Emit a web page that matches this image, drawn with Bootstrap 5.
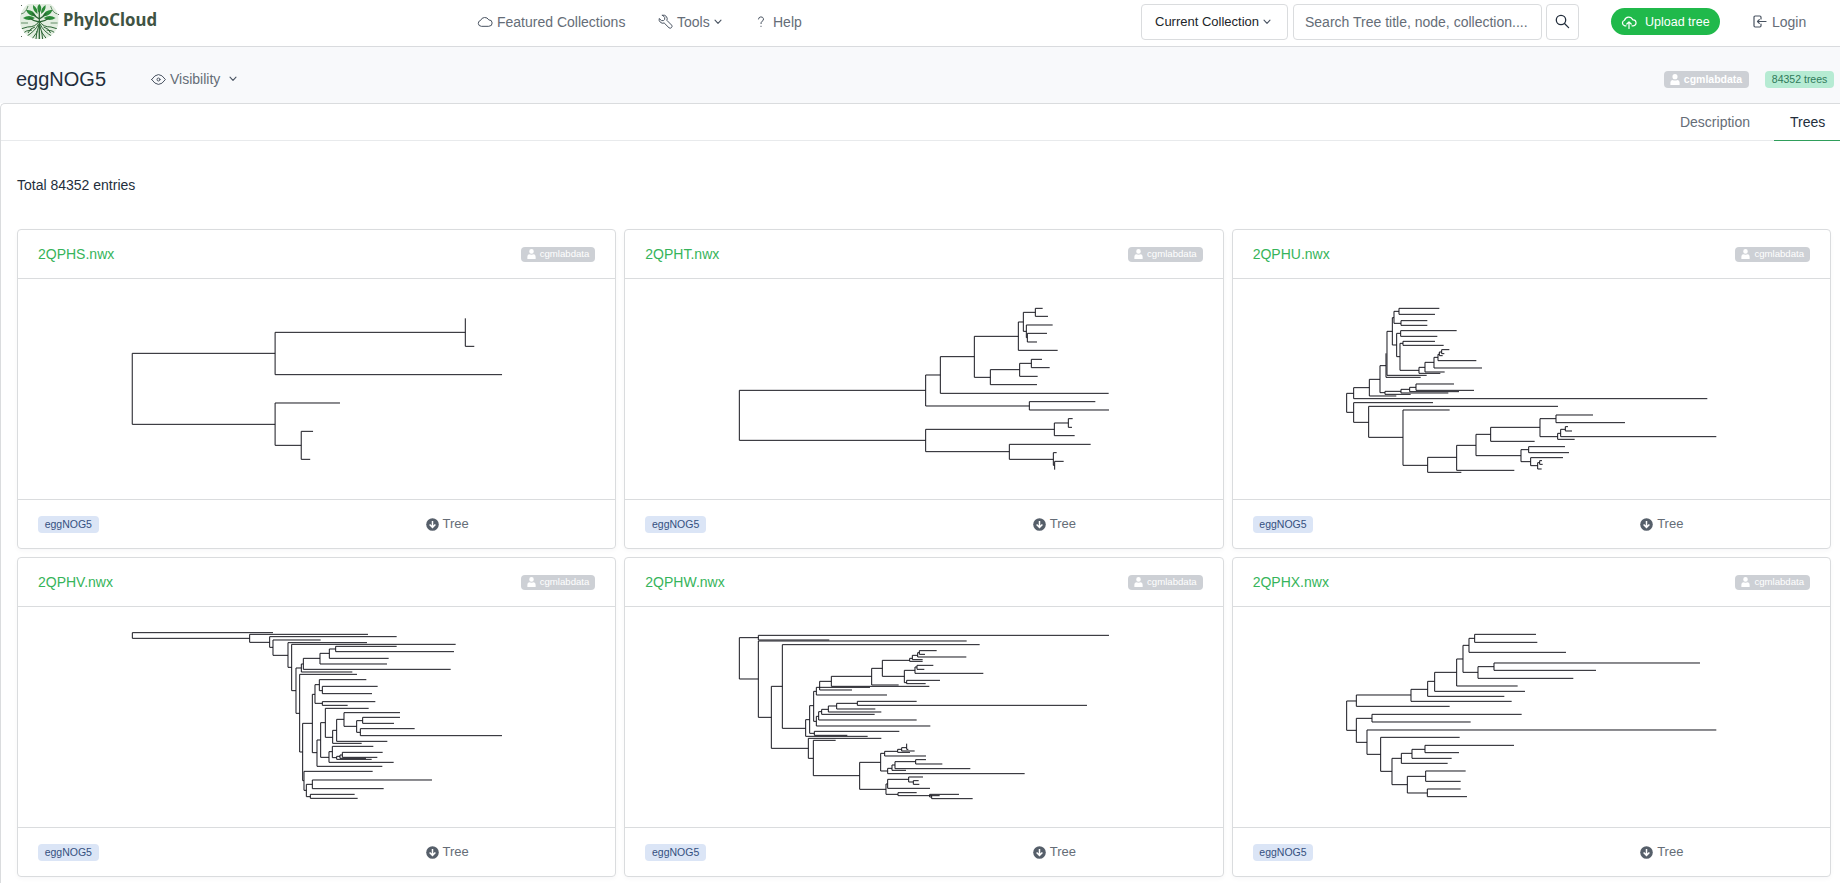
<!DOCTYPE html>
<html lang="en">
<head>
<meta charset="utf-8">
<meta name="viewport" content="width=device-width, initial-scale=1">
<title>PhyloCloud - eggNOG5</title>
<link href="https://cdn.jsdelivr.net/npm/bootstrap@5.3.0/dist/css/bootstrap.min.css" rel="stylesheet">
<style>
body{font-family:"Liberation Sans",Arial,sans-serif;font-size:14px;line-height:20px;color:#232e3c;background:#fff;height:883px;overflow:hidden}
svg{display:block;flex:none}
.ic{fill:none;stroke:#485260;stroke-width:1;stroke-linecap:round;stroke-linejoin:round}
.topbar{height:47px;padding:0 0 3px 20px;border-bottom:1px solid #d9dbde}
.topbar a,.menu-link{color:#656d77;text-decoration:none;white-space:nowrap}
.brand{width:457px;padding-bottom:5px}
.brand svg{overflow:visible}
.mainmenu{width:664px}
.box{height:36px;border:1px solid #dadcde;border-radius:4px;background:#fff}
.pick{width:147px;font-size:13px;padding-left:13px;margin-right:5px}
.search{width:249px;padding:0 11px;font-size:14px;color:#656d77;margin-right:4px}
.search::placeholder{color:#656d77;opacity:1}
.go{width:33px;margin-right:32px}
.topbar a.upload{width:109px;height:27px;border-radius:14px;background:#20b94b;color:#fff;font-size:12.5px;padding:1px 0 0 10px;margin-right:33px}
.subhead{height:56px;background:#f8f9fb;padding:0 6px 0 16px}
.subhead h1{font-size:20px;line-height:28px;margin:0;padding-top:7px;width:135px}
.tag{font-size:10.5px;line-height:17px;height:17px;border-radius:4px;padding:0 6.7px;white-space:nowrap}
.tag-owner{background:#cdd0d5;color:#fff;font-weight:700;padding:0 7px 0 6px}
.tag-count{background:#b6ebd3;color:#2f7a5a;margin-left:16px}
.tag-sm{font-weight:400;font-size:9.6px;height:15px;line-height:16px;padding:0 6px}
.tag-set{background:#dbe5f6;color:#35507f}
.panel{border:1px solid #dadcde;border-right:0;border-radius:5px 0 0 0;height:800px;background:#fff}
.tabs{height:37px;border-bottom:1px solid #e8eaec}
.tabs a{color:#656d77;text-decoration:none;height:37px;line-height:37px}
.tabs .on{color:#232e3c;border-bottom:1px solid #2f9e5b;width:66px;padding-left:16px;margin-left:24px}
.total{margin:34px 0 0 16px;height:20px}
.trees{display:grid;grid-template-columns:repeat(3,1fr);gap:8px;margin:34px 9px 0 16px}
.tcard{height:320px;border:1px solid #dadcde;border-radius:4px;box-shadow:0 2px 4px rgba(35,46,60,.03)}
.tcard header{height:49px;border-bottom:1px solid #dadcde;padding:0 20px}
.tcard header a{color:#36b45a;text-decoration:none;line-height:18px}
.tcard footer{height:49px;border-top:1px solid #dadcde;padding:0 20px;font-size:13px;color:#656d77}
.tcard .sets{width:387.5px}
.phylo{width:100%;height:220px;overflow:visible}
.phylo path{fill:none;stroke:#17171f;stroke-width:1;vector-effect:non-scaling-stroke}
</style>
</head>
<body>
<svg width="0" height="0" class="position-absolute" aria-hidden="true">
  <symbol id="user" viewBox="0 0 10 11"><path fill="#fff" d="M5 0a2.5 2.6 0 0 1 0 5.3A2.5 2.6 0 0 1 5 0zM.4 11V8.600Q.4 6.200 2.500 5.900Q5 7 7.500 5.900Q9.600 6.200 9.600 8.600V11z"/></symbol>
  <symbol id="down" viewBox="0 0 13 13"><circle cx="6.500" cy="6.500" r="6.300" fill="#565f6a"/><path d="M6.500 3v6.200M3.600 6.500L6.500 9.400L9.400 6.500" fill="none" stroke="#fff" stroke-width="1.500"/></symbol>
  <symbol id="chev" viewBox="0 0 8 6"><path d="M1 1.200L4 4.400L7 1.200" fill="none" stroke="#485260" stroke-width="1.100" stroke-linecap="round" stroke-linejoin="round"/></symbol>
</svg>

<nav class="topbar d-flex align-items-center">
  <div class="brand d-flex align-items-center">
    <svg width="140" height="38" viewBox="0 0 140 38">
      <defs><clipPath id="seal"><circle cx="19.300" cy="19" r="19.500"/></clipPath></defs>
      <g transform="translate(0,1)">
      <g clip-path="url(#seal)">
        <rect x="0" y="3" width="38.500" height="35" fill="#e3eee1"/>
        <g fill="#2b8a38">
          <path d="M19.300 3q4 4 0 9q-4-5 0-9z"/>
          <path d="M13 4q5 3 4.500 9q-5-3-4.500-9zM25.600 4q-5 3-4.500 9q5-3 4.500-9z"/>
          <path d="M6 9q7-1 10 6q-7 1-10-6zM32.600 9q-7-1-10 6q7 1 10-6z"/>
          <path d="M3 17q6-4 12 0q-6 4-12 0zM35.600 17q-6-4-12 0q6 4 12 0z"/>
        </g>
        <g fill="none" stroke="#2c6535" stroke-width="1">
          <path d="M19.300 10v28M19.300 18q-4-2-7-6M19.300 18q4-2 7-6M19.300 21q-6-1-10-4M19.300 21q6-1 10-4" stroke-width="1.300"/>
          <path d="M18.500 21q-3 5-11 5l-7 2M20 21q3 5 11 5l7 2M18.500 23q-3 7-13 13M20 23q3 7 13 13M19 24q-1 8-7 14M19.600 24q1 8 7 14M15 26q-5 1-7 6M23.600 26q5 1 7 6M12 29q-6 0-10 4M26.600 29q6 0 10 4M17 30l-1 8M21.600 30l1 8"/>
          <path d="M1 13q5-1 7-8M37.600 13q-5-1-7-8M1 22h7M37.600 22h-7" stroke-width=".7"/>
        </g>
      </g>
      <g fill="#57665a"><rect x="1" y="4" width="1" height="1"/><rect x="1" y="35" width="1" height="1"/><rect x="38" y="13" width="1" height="1"/></g>
      </g>
      <text x="43" y="26" textLength="94" lengthAdjust="spacingAndGlyphs" font-family="Noto Sans, sans-serif" font-weight="700" font-size="18" fill="#3f5343">PhyloCloud</text>
    </svg>
  </div>
  <div class="mainmenu d-flex align-items-center">
    <a href="#" class="d-flex align-items-center" style="width:181px">
      <svg class="ic me-1" width="16" height="13" viewBox="0 0 16 13"><path d="M4 11.300a3 3 0 0 1-.4-5.900A4.500 4.500 0 0 1 11.800 4.900a3.200 3.200 0 0 1 .3 6.400z"/></svg>Featured Collections</a>
    <a href="#" class="d-flex align-items-center" style="width:99px">
      <svg class="ic" style="margin-right:4px" width="15" height="15" viewBox="0 0 15 15"><path d="M4.500 1.200L6.700 3.400V5.500L5.400 6.600H3.500L1.200 4.500A3.800 3.800 0 0 0 6.200 9L11 13.800A1.900 1.900 0 0 0 13.700 11.200L8.900 6.400A3.800 3.800 0 0 0 4.500 1.200z"/></svg>Tools<svg class="ms-1" width="8" height="6"><use href="#chev"/></svg></a>
    <a href="#" class="d-flex align-items-center">
      <svg class="ic" style="margin-right:8px" width="8" height="12" viewBox="0 0 8 12"><path d="M1.500 3a2.500 2.300 0 1 1 3.500 2.300Q4 5.900 4 7.600M4 10.200v.3"/></svg>Help</a>
  </div>
  <button class="box pick d-flex align-items-center text-dark">Current Collection<svg style="margin-left:4px" width="8" height="6"><use href="#chev"/></svg></button>
  <input class="box search" placeholder="Search Tree title, node, collection....">
  <button class="box go d-flex align-items-center justify-content-center p-0" aria-label="Search"><svg width="15" height="15" viewBox="0 0 15 15" fill="none" stroke="#232e3c" stroke-width="1.300" stroke-linecap="round"><circle cx="6" cy="6" r="4.700"/><path d="M9.500 9.500L13.600 13.600"/></svg></button>
  <a href="#" class="upload d-flex align-items-center"><svg style="margin-right:8px" width="16" height="13" viewBox="0 0 16 13" fill="none" stroke="#fff" stroke-width="1.200" stroke-linecap="round" stroke-linejoin="round"><path d="M5 9.800H3.800a2.900 2.900 0 0 1-.3-5.600A4.400 4.400 0 0 1 11.700 3.800a3 3 0 0 1 .6 6H11M8 12.500V6M5.800 8L8 5.800L10.200 8"/></svg>Upload tree</a>
  <a href="#" class="d-flex align-items-center"><svg class="ic" style="margin-right:5px;stroke-width:1.200" width="14" height="13" viewBox="0 0 14 13"><path d="M8 4V2.200A1.200 1.200 0 0 0 6.800 1H2.200A1.200 1.200 0 0 0 1 2.200v8.600A1.200 1.200 0 0 0 2.200 12H6.800A1.200 1.200 0 0 0 8 10.800V9M13 6.500H4.500M6.300 4.700L4.500 6.500L6.300 8.300"/></svg>Login</a>
</nav>

<div class="subhead d-flex align-items-center">
  <h1 class="fw-normal">eggNOG5</h1>
  <div class="menu-link d-flex align-items-center" style="padding-top:8px;height:56px">
    <svg class="ic" style="margin-right:4px" width="15" height="11" viewBox="0 0 15 11"><path d="M.6 5.500Q7.500-4.500 14.400 5.500Q7.500 15.500.6 5.500z"/><circle cx="7.500" cy="5.500" r="1.500"/></svg>Visibility<svg style="margin-left:9px" width="8" height="6"><use href="#chev"/></svg>
  </div>
  <div class="ms-auto d-flex mt-2">
    <span class="tag tag-owner d-flex align-items-center"><svg style="margin-right:4px" width="10" height="11"><use href="#user"/></svg>cgmlabdata</span>
    <span class="tag tag-count">84352 trees</span>
  </div>
</div>

<main class="panel">
  <div class="tabs d-flex justify-content-end"><a href="#">Description</a><a href="#" class="on">Trees</a></div>
  <div class="total">Total 84352 entries</div>
  <div class="trees">

    <article class="tcard">
      <header class="d-flex align-items-center justify-content-between"><a href="#">2QPHS.nwx</a><span class="tag tag-owner tag-sm d-flex align-items-center"><svg style="margin-right:4px" width="9" height="10"><use href="#user"/></svg>cgmlabdata</span></header>
      <svg class="phylo"><path transform="translate(-18,-59) scale(.40816,.33333)" d="M324 400V613M324 400H674M674 337V464M674 337H1140M1140 295V379H1162M674 464H1230M324 613H674M674 549V676M674 549H833M674 676H738M738 634V718M738 634H767M738 718H760"/></svg>
      <footer class="d-flex align-items-center"><div class="sets d-flex"><span class="tag tag-set">eggNOG5</span></div><svg class="me-1" width="13" height="13"><use href="#down"/></svg>Tree</footer>
    </article>

    <article class="tcard">
      <header class="d-flex align-items-center justify-content-between"><a href="#">2QPHT.nwx</a><span class="tag tag-owner tag-sm d-flex align-items-center"><svg style="margin-right:4px" width="9" height="10"><use href="#user"/></svg>cgmlabdata</span></header>
      <svg class="phylo"><path transform="translate(95,11) scale(.33333)" d="M58 301V451M58 301H617M617 255V348M617 255H661M661 200V310M661 310H1166M661 200H763M763 139V262M763 139H895M895 96V181M895 96H910M910 67V124M910 67H946M946 55V79M946 55H968M946 79H984M910 124H919M919 105V143M919 105H998M919 143H922M922 130V156M922 130H981M922 156H951M895 181H1013M763 262H811M811 239V284M811 284H951M811 239H899M899 220V259M899 259H953M899 220H934M934 208V233M934 208H966M934 233H989M617 348H928M928 335V360M928 335H1126M928 360H1167M58 451H617M617 418V485M617 418H1003M1003 399V437M1003 437H1064M1003 399H1045M1045 386V412M1045 386H1058M1045 412H1056M617 485H868M868 463V508M868 463H1112M868 508H1000M1000 488V526M1000 488H1010M1000 526H1004M1004 514V539M1004 514H1031"/></svg>
      <footer class="d-flex align-items-center"><div class="sets d-flex"><span class="tag tag-set">eggNOG5</span></div><svg class="me-1" width="13" height="13"><use href="#down"/></svg>Tree</footer>
    </article>

    <article class="tcard">
      <header class="d-flex align-items-center justify-content-between"><a href="#">2QPHU.nwx</a><span class="tag tag-owner tag-sm d-flex align-items-center"><svg style="margin-right:4px" width="9" height="10"><use href="#user"/></svg>cgmlabdata</span></header>
      <svg class="phylo"><path transform="translate(97.330,11) scale(.33333)" d="M49 310V367M49 310H70M70 293V326M70 326H1131M70 293H117M117 268V318M117 318H198M117 268H149M149 227V308M149 227H167M149 308H164M167 190V262M167 262H271M170 124V256M170 256H289M170 124H186M186 83V165M186 83H191M191 64V100M191 64H206M206 55V73M206 55H327M206 73H314M191 100H212M212 92V106M212 92H291M212 106H291M186 165H199M199 130V200M199 130H211M211 122V139M211 122H379M211 139H321M199 200H209M209 160V241M209 160H218M218 154V166M218 154H314M218 166H340M209 241H266M266 232V250M266 250H330M266 232H284M284 217V246M284 246H343M284 217H311M311 202V234M311 234H455M311 202H323M323 193V212M323 212H438M323 193H327M327 186V197M327 197H337M327 186H334M334 179V191M334 179H357M334 191H342M164 304V313M164 313H241M164 304H212M212 298V309M212 309H354M212 298H238M238 292V305M238 305H386M238 292H257M257 282V301M257 282H371M257 301H431M49 367H70M70 338V397M70 338H308M70 397H115M115 349V442M115 349H683M115 442H218M218 360V526M218 360H358M218 526H292M292 502V547M292 547H393M292 502H379M379 466V541M379 541H552M379 466H437M437 433V497M437 433H481M481 412V454M481 454H613M481 412H629M629 386V440M629 386H677M677 375V398M677 375H788M677 398H884M629 440H682M682 430V448M682 448H733M682 430H691M691 418V440M691 440H1158M691 418H705M705 410V423M705 410H713M705 423H725M437 497H572M572 479V515M572 479H595M595 470V488M595 470H704M595 488H716M572 515H601M601 503V527M601 503H698M601 527H622M622 518V537M622 537H634M622 518H628M628 512V523M628 512H635M628 523H637"/></svg>
      <footer class="d-flex align-items-center"><div class="sets d-flex"><span class="tag tag-set">eggNOG5</span></div><svg class="me-1" width="13" height="13"><use href="#down"/></svg>Tree</footer>
    </article>

    <article class="tcard">
      <header class="d-flex align-items-center justify-content-between"><a href="#">2QPHV.nwx</a><span class="tag tag-owner tag-sm d-flex align-items-center"><svg style="margin-right:4px" width="9" height="10"><use href="#user"/></svg>cgmlabdata</span></header>
      <svg class="phylo"><path transform="translate(102,8) scale(.33333)" d="M37 53V70M37 53H459M37 70H389M389 58V82M389 58H744M389 82H449M449 65V97M449 65H830M449 97H459M459 75V121M459 75H602M459 121H504M504 83V157M504 83H741M504 157H515M515 88V227M515 88H1007M515 227H528M528 159V295M528 159H544M544 147V171M544 171H697M544 147H550M550 130V163M550 163H992M550 130H600M600 115V147M600 147H801M600 115H628M628 102V130M628 130H806M628 102H647M647 94V110M647 94H830M647 110H1002M528 295H539M539 178V411M539 178H711M539 411H548M548 325V497M548 325H577M577 238V413M577 238H585M585 209V265M585 209H598M598 194V227M598 194H739M598 227H607M607 214V236M607 214H773M607 236H756M585 265H607M607 260V271M607 260H766M607 271H683M577 413H591M591 375V454M591 454H787M591 375H602M602 323V427M602 323H616M616 280V367M616 280H746M616 367H638M638 346V385M638 385H725M638 346H650M650 313V379M650 379H802M650 313H672M672 293V334M672 293H840M672 334H710M710 317V352M710 317H728M728 307V325M728 307H840M728 325H822M710 352H721M721 341V362M721 341H884M721 362H1146M602 427H627M627 410V442M627 442H821M627 410H637M637 394V428M637 394H760M637 428H650M650 424V433M650 433H755M650 424H660M660 420V430M660 430H738M660 420H667M667 412V427M667 412H788M667 427H772M548 497H552M552 469V526M552 469H758M552 526H559M559 508V545M559 508H577M577 495V521M577 495H936M577 521H791M559 545H571M571 538V550M571 538H704M571 550H713"/></svg>
      <footer class="d-flex align-items-center"><div class="sets d-flex"><span class="tag tag-set">eggNOG5</span></div><svg class="me-1" width="13" height="13"><use href="#down"/></svg>Tree</footer>
    </article>

    <article class="tcard">
      <header class="d-flex align-items-center justify-content-between"><a href="#">2QPHW.nwx</a><span class="tag tag-owner tag-sm d-flex align-items-center"><svg style="margin-right:4px" width="9" height="10"><use href="#user"/></svg>cgmlabdata</span></header>
      <svg class="phylo"><path transform="translate(105,8) scale(.33333)" d="M28 68V192M28 68H85M85 61V75M85 61H1137M85 75H298M28 192H85M85 78V307M85 78H710M85 307H124M124 214V400M124 214H157M157 89V340M157 89H749M157 340H227M227 314V364M227 364H413M227 314H239M239 272V355M239 355H253M253 349V361M253 349H508M253 361H352M239 272H251M251 229V319M251 229H259M259 217V240M259 240H471M259 217H269M269 199V225M269 225H366M269 217H420M269 199H304M304 184V214M304 214H598M304 184H425M425 160V210M425 210H506M425 160H457M457 136V184M457 136H539M539 130V139M539 139H578M539 130H547M547 121V134M547 134H578M547 121H563M563 113V126M563 126H709M563 113H568M568 107V118M568 107H620M568 118H585M457 184H523M523 166V203M523 166H555M555 156V175M555 175H760M555 156H561M561 151V163M561 151H610M561 163H583M523 203H530M530 196V206M530 196H630M530 206H587M251 319H259M259 304V333M259 333H601M259 304H266M266 290V315M266 315H560M266 290H275M275 283V298M275 298H434M275 283H295M295 273V291M295 291H454M295 273H320M320 265V282M320 282H436M320 265H382M382 259V271M382 259H560M382 271H1071M124 400H235M235 370V430M235 370H454M235 430H250M250 376V482M250 376H317M250 482H389M389 442V523M389 442H452M452 415V468M452 415H464M464 409V423M464 423H588M464 409H503M503 403V412M503 412H540M503 403H515M515 398V408M515 408H554M515 398H530M530 386V403M530 403H535M452 468H473M473 460V476M473 476H884M473 460H486M486 450V466M486 466H528M486 450H495M495 440V461M495 461H721M495 440H557M557 434V447M557 434H588M557 447H637M389 523H468M468 507V538M468 507H473M473 493V520M473 520H600M473 493H536M536 486V501M536 486H579M536 501H550M550 497V508M550 497H566M550 508H568M468 538H504M504 533V542M504 533H560M504 542H599M599 538V546M599 538H687M599 542H629M599 546H605M605 541V551M605 551H728"/></svg>
      <footer class="d-flex align-items-center"><div class="sets d-flex"><span class="tag tag-set">eggNOG5</span></div><svg class="me-1" width="13" height="13"><use href="#down"/></svg>Tree</footer>
    </article>

    <article class="tcard">
      <header class="d-flex align-items-center justify-content-between"><a href="#">2QPHX.nwx</a><span class="tag tag-owner tag-sm d-flex align-items-center"><svg style="margin-right:4px" width="9" height="10"><use href="#user"/></svg>cgmlabdata</span></header>
      <svg class="phylo"><path transform="translate(97.330,8) scale(.33333)" d="M49 258V346M49 258H78M78 240V274M78 274H358M78 240H242M242 223V259M242 259H544M242 223H292M292 199V244M292 244H522M292 199H313M313 172V229M313 229H584M313 172H379M379 132V213M379 213H562M379 132H398M398 91V172M398 91H416M416 70V112M416 112H707M416 70H433M433 58V82M433 58H617M433 82H621M398 172H443M443 155V190M443 190H729M443 155H491M491 144V166M491 144H1109M491 166H797M49 346H78M78 310V382M78 310H125M125 298V321M125 298H574M125 321H421M78 382H110M110 345V418M110 345H1158M110 418H151M151 367V469M151 367H388M151 469H185M185 430V509M185 430H213M213 415V445M213 445H352M213 415H245M245 403V430M245 430H364M245 403H284M284 391V413M284 391H551M284 413H386M185 509H231M231 484V534M231 484H286M286 468V499M286 468H406M286 499H391M231 534H291M291 522V545M291 522H391M291 545H410"/></svg>
      <footer class="d-flex align-items-center"><div class="sets d-flex"><span class="tag tag-set">eggNOG5</span></div><svg class="me-1" width="13" height="13"><use href="#down"/></svg>Tree</footer>
    </article>

  </div>
</main>
<script src="https://cdn.jsdelivr.net/npm/bootstrap@5.3.0/dist/js/bootstrap.bundle.min.js"></script>
</body>
</html>
